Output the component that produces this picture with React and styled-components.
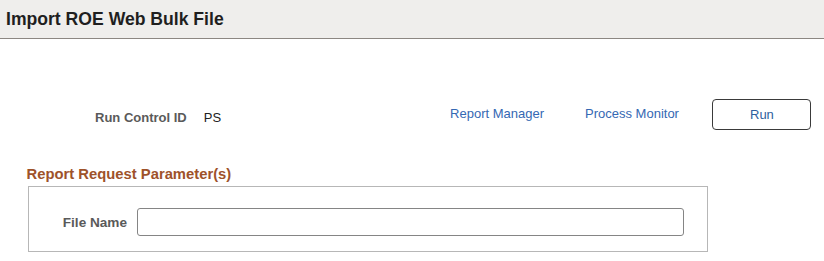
import React from "react";
import styled, { createGlobalStyle } from "styled-components";

const Global = createGlobalStyle`
  html, body { margin: 0; padding: 0; background: #ffffff; }
  body { font-family: "Liberation Sans", Arial, sans-serif; }
`;

const Page = styled.div`
  width: 824px;
  height: 261px;
  overflow: hidden;
  background: #fff;
`;

const Header = styled.header`
  height: 38px;
  background: #efeeec;
  border-bottom: 1px solid #8c8782;
  display: flex;
  align-items: center;
  padding-left: 6px;
  box-sizing: content-box;
`;

const Title = styled.h1`
  margin: 0;
  font-size: 17.6px;
  font-weight: 700;
  color: #1f1f1f;
  line-height: 20px;
  padding-bottom: 1px;
`;

const ActionRow = styled.div`
  display: flex;
  align-items: flex-start;
  height: 31px;
  margin-top: 60px;
  padding-left: 95px;
`;

const FieldLabel = styled.span`
  font-size: ${(p) => p.$size || 13}px;
  font-weight: 700;
  color: #5a5a5a;
  line-height: 15px;
  padding-top: ${(p) => p.$top || 0}px;
`;

const FieldValue = styled.span`
  font-size: 13px;
  color: #222;
  line-height: 15px;
  padding-top: 11px;
  margin-left: 17px;
`;

const Link = styled.a`
  font-size: 13px;
  color: #3568b3;
  text-decoration: none;
  line-height: 15px;
  padding-top: 6.5px;
  margin-left: ${(p) => p.$gap}px;
  cursor: pointer;
`;

const RunButton = styled.button`
  margin-left: ${(p) => p.$gap}px;
  width: 99px;
  height: 31px;
  border: 1px solid #3a3a3a;
  border-radius: 4px;
  background: #fff;
  font-family: "Liberation Sans", Arial, sans-serif;
  font-size: 13px;
  color: #2f5f9e;
  padding: 0;
  cursor: pointer;
`;

const Section = styled.section`
  margin-top: 36px;
  padding-left: 26.5px;
`;

const SectionTitle = styled.h2`
  margin: 0;
  font-size: 14.8px;
  font-weight: 700;
  color: #9e522a;
  line-height: 17px;
  height: 20px;
`;

const GroupBox = styled.div`
  margin-left: 1.5px;
  width: 678px;
  border: 1px solid #b7b7b7;
  padding: 21px 0 15px 0;
  display: flex;
  align-items: center;
`;

const LabelCell = styled.div`
  width: 98px;
  display: flex;
  justify-content: flex-end;
  padding-right: 10px;
`;

const TextInput = styled.input`
  width: 547px;
  height: 28px;
  box-sizing: border-box;
  border: 1px solid #858585;
  border-radius: 3px;
  background: #fff;
  font-family: "Liberation Sans", Arial, sans-serif;
  font-size: 13px;
  padding: 0 6px;
  outline: none;
`;

export default function App() {
  return (
    <Page>
      <Global />
      <Header>
        <Title>Import ROE Web Bulk File</Title>
      </Header>
      <ActionRow>
        <FieldLabel $top={11}>Run Control ID</FieldLabel>
        <FieldValue>PS</FieldValue>
        <Link $gap={229}>Report Manager</Link>
        <Link $gap={41}>Process Monitor</Link>
        <RunButton $gap={33.5}>Run</RunButton>
      </ActionRow>
      <Section>
        <SectionTitle>Report Request Parameter(s)</SectionTitle>
        <GroupBox>
          <LabelCell>
            <FieldLabel $size={13.6}>File Name</FieldLabel>
          </LabelCell>
          <TextInput type="text" />
        </GroupBox>
      </Section>
    </Page>
  );
}
